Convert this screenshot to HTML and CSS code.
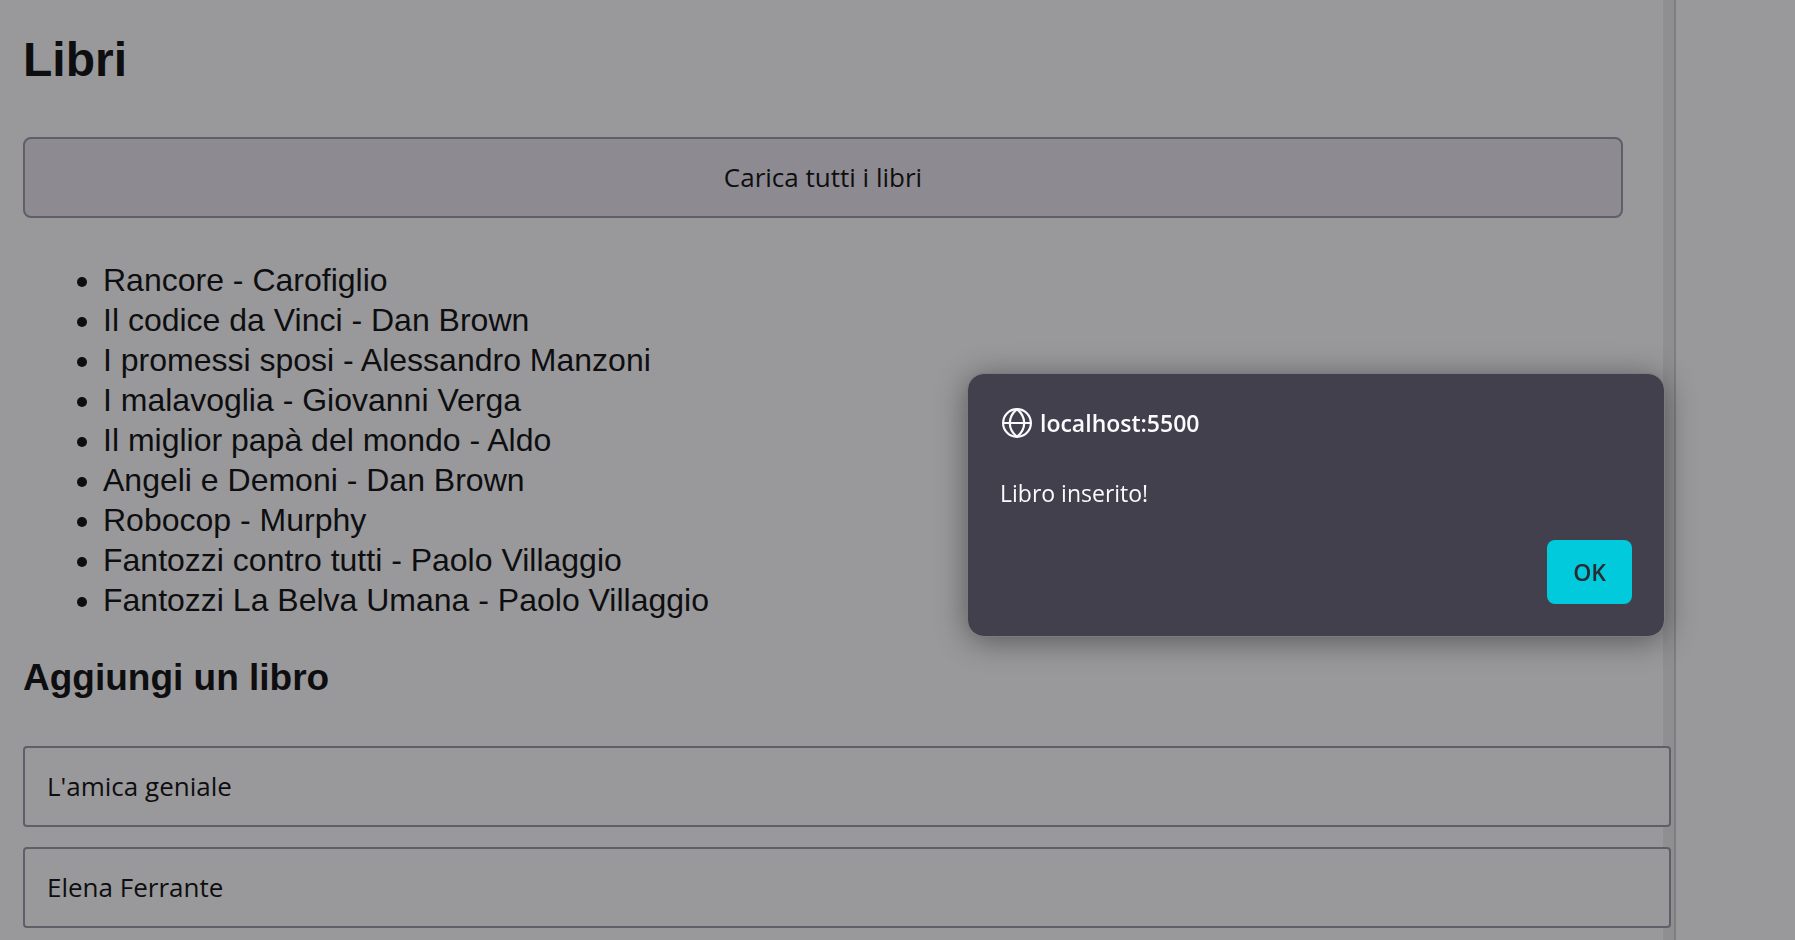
FILE: index.html
```html
<!DOCTYPE html>
<html lang="it">
<head>
<meta charset="utf-8">
<title>Libri</title>
<link rel="stylesheet" href="styles.css">
</head>
<body>
<div class="window">
  <main class="page">
    <h1 class="title">Libri</h1>
    <button class="load-button" type="button">Carica tutti i libri</button>
    <ul class="book-list">
      <li>Rancore - Carofiglio</li>
      <li>Il codice da Vinci - Dan Brown</li>
      <li>I promessi sposi - Alessandro Manzoni</li>
      <li>I malavoglia - Giovanni Verga</li>
      <li>Il miglior papà del mondo - Aldo</li>
      <li>Angeli e Demoni - Dan Brown</li>
      <li>Robocop - Murphy</li>
      <li>Fantozzi contro tutti - Paolo Villaggio</li>
      <li>Fantozzi La Belva Umana - Paolo Villaggio</li>
    </ul>
    <h2 class="subtitle">Aggiungi un libro</h2>
    <form class="book-form">
      <input class="field" type="text" aria-label="Titolo" value="L'amica geniale">
      <input class="field" type="text" aria-label="Autore" value="Elena Ferrante">
    </form>
  </main>
  <div class="gutter"></div>
  <aside class="side"></aside>
</div>
<dialog class="alert" open aria-labelledby="alert-origin">
  <header class="alert-header">
    <svg class="globe" viewBox="0 0 34 34" fill="none" stroke="currentColor" stroke-width="2.2" aria-hidden="true">
      <circle cx="17" cy="17" r="13.9"/>
      <path d="M17 3.1c-9.6 8-9.6 19.8 0 27.8M17 3.1c9.6 8 9.6 19.8 0 27.8M3 17h28"/>
    </svg>
    <strong class="origin" id="alert-origin">localhost:5500</strong>
  </header>
  <p class="message">Libro inserito!</p>
  <form class="actions" method="dialog">
    <button class="ok" type="submit">OK</button>
  </form>
</dialog>
</body>
</html>
```
FILE: styles.css
```css
* {
  box-sizing: border-box;
}

body {
  margin: 0;
  background: #99999b;
  color: #0e0e10;
  font-family: "Liberation Sans", Arial, sans-serif;
  font-size: 32px;
  line-height: 40px;
}

.window {
  display: grid;
  grid-template-columns: 1fr 13px 119px;
  height: 100vh;
  overflow: hidden;
}

.page {
  padding: 32px 40px 0 23px;
}

.gutter {
  background: #8f8f91;
  border-right: 2px solid #7e7e80;
}

.title {
  margin: 0 0 49px;
  font-size: 48px;
  line-height: 56px;
}

.load-button,
.field {
  display: block;
  padding: 20px 22px;
  border: 2px solid #5f5e69;
  color: inherit;
  font-family: "Open Sans", Tahoma, sans-serif;
  font-size: 26px;
  line-height: 37px;
}

.load-button {
  width: 100%;
  border-radius: 8px;
  background: #8d8b91;
}

.book-list {
  margin: 42px 0 0;
  padding: 0 0 0 80px;
}

.subtitle {
  margin: 36px 0 46px;
  font-size: 37px;
  line-height: 44px;
}

.book-form {
  display: grid;
  gap: 20px;
  margin-right: -48px;
}

.field {
  position: relative;
  width: 100%;
  border-radius: 4px;
  background: #99999b;
}

.alert {
  position: fixed;
  top: 374px;
  right: 131px;
  left: auto;
  width: 696px;
  margin: 0;
  padding: 32px;
  border: 0;
  border-radius: 16px;
  outline: 1px solid #7c7c80;
  background: #43404d;
  color: #fbfbfe;
  box-shadow: 0 4px 32px rgb(0 0 0 / 45%);
  font-family: "Open Sans", "Segoe UI", sans-serif;
  font-size: 23px;
  line-height: 32px;
}

.alert-header {
  display: flex;
  align-items: center;
  gap: 6px;
}

.globe {
  width: 34px;
  height: 34px;
}

.origin {
  font-weight: 600;
}

.message {
  margin: 37px 0 31px;
}

.actions {
  display: flex;
  justify-content: flex-end;
}

.ok {
  padding: 16px 26px;
  border: 0;
  border-radius: 8px;
  background: #00cadb;
  color: #2b2a33;
  font: inherit;
  font-weight: 600;
}
```
